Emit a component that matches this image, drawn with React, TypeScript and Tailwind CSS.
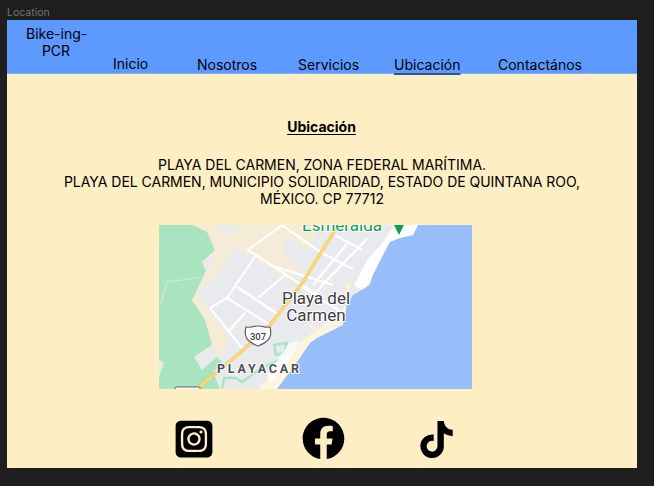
import { FaFacebook, FaTiktok } from "react-icons/fa";
import { FaSquareInstagram } from "react-icons/fa6";

function MapPicture() {
  return (
    <svg viewBox="0 0 313 164" className="block w-full h-full">
      <rect width="313" height="164" fill="#f5ecd8" />
      {/* town blocks */}
      <path d="M54 0L81 0L71 10Z" fill="#e8eaed" />
      <path d="M74 23L86 28L130 55L141 42L124 30L128 12L150 22L165 0L250 0L220 40L205 80L160 115L130 164L45 164L60 137L71 113L51 87L38 67L61 47Z" fill="#e8eaed" />
      <path d="M140 18L150 24L158 0L135 0L122 12Z" fill="#f5ecd8" />
      <path d="M35 132L53 122L58 132L43 145Z" fill="#e8eaed" />
      {/* park */}
      <path d="M0 0L34 0L48 7L56 25L43 37L47 46L33 75L46 95L53 120L35 132L43 145L58 132L63 137L54 147L61 164L0 164Z" fill="#a8e4c0" />
      <path d="M0 135L5 138L0 152ZM43 37L50 31L56 36L48 44Z" fill="#e8eaed" />
      <path d="M2 78L8 57L44 52" fill="none" stroke="#d4e8dc" strokeWidth="1.2" />
      {/* streets */}
      <path
        d="M123 0L89 25L154 67M123 0L161 27L194 44M97 30L68 73L51 83L83 123M68 73L111 100M78 62L120 90M126 50L99 73M86 88L69 107M111 40L174 60M176 10L203 25M208 14L166 57L150 76M188 19L154 60M140 60L190 92"
        fill="none"
        stroke="#ffffff"
        strokeWidth="2.2"
      />
      <path d="M190 58L186 72L200 80M150 100L170 112" fill="none" stroke="#fdf1cf" strokeWidth="3" />
      {/* coast and sea */}
      <path d="M236 0L222 20L210 32L195 60L205 66L214 50L223 32L231 17L241 13L254 14L262 0Z" fill="#ffffff" />
      <path d="M140 118L165 100L188 80L194 70L205 62L200 84L160 118L135 140L120 164L100 164Z" fill="#fdf5dc" />
      <path
        d="M259 0L254 10L241 13L231 17L223 32L214 50L211 60L194 70L188 80L184 100L158 113L151 118L138 137L118 164L313 164L313 0Z"
        fill="#97bdfb"
      />
      {/* highway */}
      <path d="M179 0L144 57L111 100L82 127L38 164" fill="none" stroke="#fbc64a" strokeWidth="3.2" />
      <path d="M179 0L144 57L111 100L82 127L38 164" fill="none" stroke="#fde293" strokeWidth="1.2" />
      {/* playacar green */}
      <path
        d="M115 120L128 118L125 128L117 130ZM63 165L65 153L77 153L83 157L100 145L113 138L122 134"
        fill="none"
        stroke="#a8e4c0"
        strokeWidth="2.4"
      />
      <path d="M130 118L140 116L128 140L112 158L108 150Z" fill="#ffffff" fillOpacity="0.75" />
      {/* route shield */}
      <path d="M87 102C92 103 94 101 99 101C104 101 106 103 111 102C113 110 112 116 99 121C86 116 85 110 87 102Z" fill="#fff" stroke="#5f6368" strokeWidth="1.2" />
      <text x="99" y="115" textAnchor="middle" fontFamily="Roboto, sans-serif" fontSize="9.5" fontWeight="500" fill="#3c4043">307</text>
      {/* marker */}
      <path d="M235 0L245 0L240 10Z" fill="#0f9d58" />
      <g fontFamily="Roboto, sans-serif" stroke="#ffffff" strokeWidth="2" paintOrder="stroke" strokeLinejoin="round">
        <text x="143" y="6" fontSize="17" fill="#0f9d58">Esmeralda</text>
        <text x="157" y="79" textAnchor="middle" fontSize="17" fill="#3c4043">Playa del</text>
        <text x="157" y="96" textAnchor="middle" fontSize="17" fill="#3c4043">Carmen</text>
        <text x="58" y="148" fontSize="12.5" fontWeight="700" letterSpacing="2.8" fill="#4d5156">PLAYACAR</text>
      </g>
      <rect x="16" y="162" width="25" height="4" rx="1" fill="#fff" stroke="#5f6368" strokeWidth="1" />
    </svg>
  );
}

export default function App() {
  return (
    <div className="w-[654px] h-[486px] bg-[#1e1e1e] pt-[6px] overflow-hidden font-['Inter',sans-serif]">
      <p className="ml-[7px] h-[14px] text-[10.5px] leading-[14px] text-[#757575]">Location</p>
      <div className="ml-[7px] w-[630px] h-[448px] bg-[#feeec3] flex flex-col">
        <nav className="h-[54px] shrink-0 bg-[#5c9aff] border-b border-[#7fb0ff] flex items-end text-black text-[14px] leading-[17px]">
          <a className="ml-[19px] w-[60px] self-start mt-[5px] text-center whitespace-nowrap">
            Bike-ing-
            <br />
            PCR
          </a>
          <a className="ml-[27px] w-[34px] mb-[1px] text-center">Inicio</a>
          <a className="ml-[50px] w-[60px] text-center">Nosotros</a>
          <a className="ml-[41px] w-[60px] text-center">Servicios</a>
          <a className="ml-[36px] w-[66px] text-center underline decoration-2 decoration-[#2c5394] underline-offset-[3px]">Ubicación</a>
          <a className="ml-[38px] w-[83px] text-center">Contactános</a>
        </nav>
        <main className="flex-1 flex flex-col items-center text-black text-[14px] leading-[17px]">
          <h2 className="mt-[45px] -ml-[1px] font-bold text-[14px] leading-[16px] underline underline-offset-2">Ubicación</h2>
          <p className="mt-[21px] w-[540px] text-center tracking-[-0.03px]">
            PLAYA DEL CARMEN, ZONA FEDERAL MARÍTIMA.
            <br />
            PLAYA DEL CARMEN, MUNICIPIO SOLIDARIDAD, ESTADO DE QUINTANA ROO, MÉXICO. CP 77712
          </p>
          <div className="mt-[18px] self-start ml-[152px] w-[313px] h-[164px] shrink-0">
            <MapPicture />
          </div>
          <div className="mt-[28px] w-full flex items-center">
            <FaSquareInstagram className="ml-[166px] w-[42px] h-[42px]" />
            <FaFacebook className="ml-[87px] w-[43px] h-[43px]" />
            <FaTiktok className="ml-[73px] w-[37px] h-[37px] mt-[2px]" />
          </div>
        </main>
      </div>
    </div>
  );
}
